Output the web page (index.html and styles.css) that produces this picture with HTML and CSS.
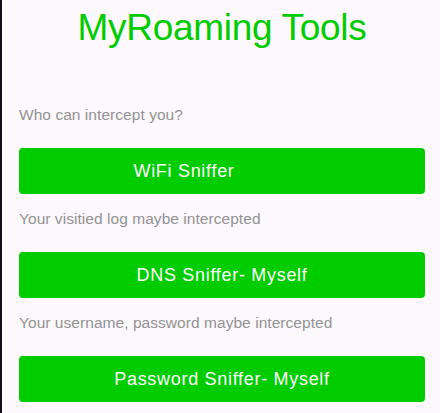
FILE: index.html
```html
<!DOCTYPE html>
<html lang="en">
<head>
<meta charset="UTF-8">
<meta name="viewport" content="width=device-width, initial-scale=1.0">
<title>MyRoaming Tools</title>
<link rel="stylesheet" href="styles.css">
</head>
<body>
<div class="screen">
    <h1 class="title">MyRoaming Tools</h1>

    <p class="hint first">Who can intercept you?</p>
    <button type="button" class="tool-btn wifi">WiFi Sniffer</button>

    <p class="hint">Your visitied log maybe intercepted</p>
    <button type="button" class="tool-btn">DNS Sniffer- Myself</button>

    <p class="hint">Your username, password maybe intercepted</p>
    <button type="button" class="tool-btn">Password Sniffer- Myself</button>
</div>
</body>
</html>
```

FILE: styles.css
```css
html, body {
    margin: 0;
    padding: 0;
    height: 100%;
}
body {
    font-family: "Liberation Sans", Arial, sans-serif;
    background-color: #fcf8fc;
    border-left: 2px solid #10101a;
    box-sizing: border-box;
    overflow: hidden;
}
.screen {
    display: flex;
    flex-direction: column;
    padding: 6px 15px 0 17px;
}
.title {
    margin: 0;
    font-size: 37px;
    font-weight: normal;
    line-height: 44px;
    letter-spacing: -0.3px;
    text-align: center;
    color: #00cc00;
}
.hint {
    margin: 15px 0 23px 0;
    font-size: 15.5px;
    line-height: 20px;
    letter-spacing: 0.05px;
    color: #939393;
}
.hint.first {
    margin-top: 55px;
}
.tool-btn {
    height: 46px;
    border: none;
    border-radius: 4px;
    background-color: #00cc00;
    color: white;
    font-family: "Liberation Sans", Arial, sans-serif;
    font-size: 18px;
    letter-spacing: 0.7px;
    cursor: pointer;
}
.tool-btn.wifi {
    padding-right: 82px;
}
```
